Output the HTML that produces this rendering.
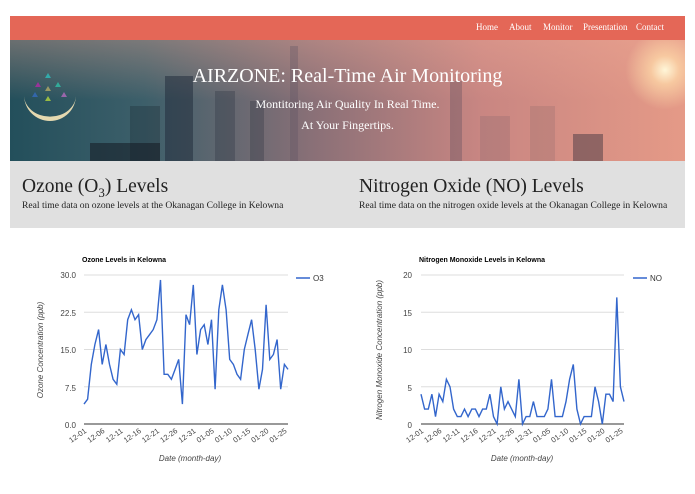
<!DOCTYPE html>
<html><head><meta charset="utf-8"><style>
body{margin:0;background:#fff;width:695px;height:494px;overflow:hidden;font-family:"Liberation Serif",serif;position:relative}
.nav{position:absolute;left:10px;top:16px;width:675px;height:24px;background:#e46757}
.nav a{position:absolute;top:6px;color:#fff;font-size:9px;text-decoration:none}
.hero{position:absolute;left:10px;top:40px;width:675px;height:121px;overflow:hidden;
background:linear-gradient(90deg,#234f5b 0%,#3d5f6a 20%,#8a7077 45%,#c98682 70%,#e59a87 100%)}
.hero .top{position:absolute;left:0;top:0;width:100%;height:60px;background:linear-gradient(180deg,rgba(240,170,150,.35),rgba(0,0,0,0))}
.sun{position:absolute;right:-20px;top:-10px;width:80px;height:80px;border-radius:50%;background:radial-gradient(circle,#fff6d8 0%,rgba(255,220,170,.7) 25%,rgba(255,200,160,0) 70%)}
.b{position:absolute;bottom:0;background:rgba(40,45,60,.3)}
.h1{position:absolute;left:0;width:100%;text-align:center;color:#fff}
.gray{position:absolute;left:10px;top:161px;width:675px;height:67px;background:#e0e0e0}
.gray h2{position:absolute;margin:0;font-weight:normal;font-size:19.5px;color:#222;top:15px}
.gray p{position:absolute;margin:0;font-size:9.6px;color:#222;top:39px}
svg text{font-family:"Liberation Sans",sans-serif}
</style></head><body>
<div class="nav">
<a style="left:466px">Home</a><a style="left:499px">About</a><a style="left:533px">Monitor</a><a style="left:573px">Presentation</a><a style="left:626px">Contact</a>
</div>
<div class="hero">
<div class="top"></div><div class="sun"></div>
<div class="b" style="left:155px;width:28px;height:85px;background:rgba(30,40,55,.5)"></div>
<div class="b" style="left:120px;width:30px;height:55px;background:rgba(30,45,55,.35)"></div>
<div class="b" style="left:80px;width:70px;height:18px;background:rgba(20,25,35,.55)"></div>
<div class="b" style="left:205px;width:20px;height:70px"></div>
<div class="b" style="left:240px;width:14px;height:60px"></div>
<div class="b" style="left:280px;width:8px;height:115px;background:rgba(90,80,95,.3)"></div>
<div class="b" style="left:440px;width:12px;height:80px;background:rgba(80,70,85,.3)"></div>
<div class="b" style="left:470px;width:30px;height:45px;background:rgba(110,90,100,.2)"></div>
<div class="b" style="left:520px;width:25px;height:55px;background:rgba(120,95,100,.2)"></div>
<div class="b" style="left:563px;width:30px;height:27px;background:rgba(70,55,65,.5)"></div>
<svg style="position:absolute;left:10px;top:25px" width="60" height="60" viewBox="0 0 60 60">
<path d="M4 30 A26 26 0 0 0 56 30 A24 20 0 0 1 4 30Z" fill="#e5d9b0"/>
<polygon points="28,8 31,13 25,13" fill="#3aa"/><polygon points="18,17 21,22 15,22" fill="#939"/>
<polygon points="38,17 41,22 35,22" fill="#3a9"/><polygon points="28,21 31,26 25,26" fill="#996"/>
<polygon points="15,27 18,32 12,32" fill="#36a"/><polygon points="44,27 47,32 41,32" fill="#96a"/>
<polygon points="28,31 31,36 25,36" fill="#9b4"/>
</svg>
<div class="h1" style="top:25px;font-size:20px">AIRZONE: Real-Time Air Monitoring</div>
<div class="h1" style="top:57px;font-size:12px">Montitoring Air Quality In Real Time.</div>
<div class="h1" style="top:78px;font-size:12px">At Your Fingertips.</div>
</div>
<div class="gray">
<h2 style="left:12px">Ozone (O<sub style="font-size:13px">3</sub>) Levels</h2>
<p style="left:12px">Real time data on ozone levels at the Okanagan College in Kelowna</p>
<h2 style="left:349px">Nitrogen Oxide (NO) Levels</h2>
<p style="left:349px">Real time data on the nitrogen oxide levels at the Okanagan College in Kelowna</p>
</div>
<svg id="c" style="position:absolute;left:0;top:0" width="695" height="494">
<g font-size="7" font-weight="bold" fill="#000"><text x="82" y="262">Ozone Levels in Kelowna</text><text x="419" y="262">Nitrogen Monoxide Levels in Kelowna</text></g>
<g font-size="8" fill="#444" text-anchor="end">
<text x="76" y="278">30.0</text><text x="76" y="316">22.5</text><text x="76" y="353">15.0</text><text x="76" y="391">7.5</text><text x="76" y="428">0.0</text>
<text x="412" y="278">20</text><text x="412" y="316">15</text><text x="412" y="353">10</text><text x="412" y="391">5</text><text x="412" y="428">0</text>
</g>
<g font-size="8" fill="#444" font-style="italic" text-anchor="middle">
<text x="190" y="461">Date (month-day)</text><text x="522" y="461">Date (month-day)</text>
<text transform="translate(43,350) rotate(-90)">Ozone Concentration (ppb)</text>
<text transform="translate(382,350) rotate(-90)">Nitrogen Monoxide Concentration (ppb)</text>
</g>
<g stroke="#3366cc" stroke-width="1.5"><line x1="296" y1="278" x2="310" y2="278"/><line x1="633" y1="278" x2="647" y2="278"/></g>
<g font-size="8" fill="#333"><text x="313" y="281">O3</text><text x="650" y="281">NO</text></g>
<g id="dyn"></g>
</svg>
<script>
var O=[4,5,12,16,19,12,16,12,9,8,15,14,21,23,21,22,15,17,18,19,21,29,10,10,9,11,13,4,22,20,28,14,19,20,16,21,7,23,28,23,13,12,10,9,15,18,21,15,7,11,24,13,14,17,7,12,11];
var N=[4,2,2,4,1,4,3,6,5,2,1,1,2,1,2,2,1,2,2,4,1,0,5,2,3,2,1,6,0,1,1,3,1,1,1,2,6,1,1,1,3,6,8,2,0,1,1,1,5,3,0,4,4,3,17,5,3];
var lab=["12-01","12-06","12-11","12-16","12-21","12-26","12-31","01-05","01-10","01-15","01-20","01-25"];
var s="";
function ch(x0,x1,d,max){
 for(var i=0;i<5;i++){var y=275+i*37.25;s+='<line x1="'+x0+'" x2="'+x1+'" y1="'+y+'" y2="'+y+'" stroke="'+(i==4?'#333':'#ddd')+'" stroke-width="1"/>';}
 var st=(x1-x0)/(d.length-1),p=[];
 d.forEach(function(v,i){p.push((x0+i*st).toFixed(1)+","+(424-v/max*149).toFixed(1));});
 s+='<polyline fill="none" stroke="#3366cc" stroke-width="1.4" points="'+p.join(" ")+'"/>';
 lab.forEach(function(l,i){var x=x0+i*5*st+3,y=432;s+='<text font-size="7.5" fill="#444" text-anchor="end" transform="translate('+x+','+y+') rotate(-35)">'+l+'</text>';});
}
ch(84,288,O,30);ch(421,624,N,20);
document.getElementById("dyn").innerHTML=s;
</script>
</body></html>
